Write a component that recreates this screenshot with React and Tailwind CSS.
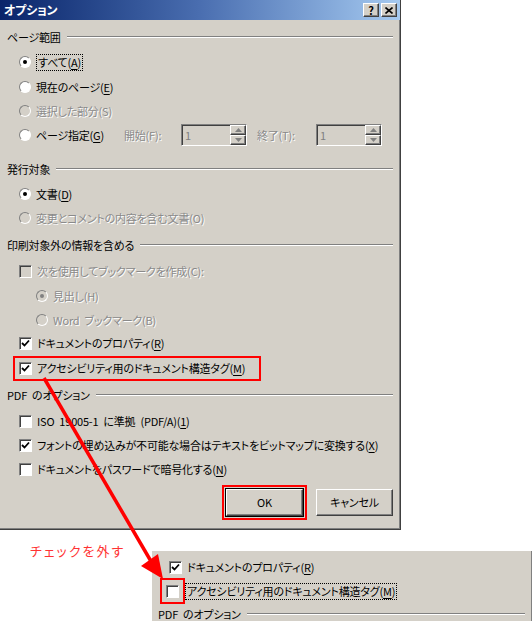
import React from 'react';

const font = "font-['Noto_Sans_CJK_JP','Noto_Sans',sans-serif] [font-feature-settings:'palt']";

const raised = 'border border-t-white border-l-white border-r-[#404040] border-b-[#404040] shadow-[inset_-1px_-1px_0_#808080] bg-[#d4d0c8]';
const sunken = 'border border-t-[#808080] border-l-[#808080] border-r-white border-b-white shadow-[inset_1px_1px_0_#404040]';
const disabledText = 'text-[#8a8a8a] [text-shadow:1px_1px_0_#fff]';

const Check = ({ checked, disabled }) => (
    <span className={`w-[13px] h-[13px] shrink-0 flex items-center justify-center ${sunken} ${disabled ? 'bg-[#d4d0c8]' : 'bg-white'}`}>
        {checked && (
            <svg width="9" height="9" viewBox="0 0 9 9">
                <path d="M1 4 L3.5 6.5 L8 1.5" fill="none" stroke="#000" strokeWidth="1.8" />
            </svg>
        )}
    </span>
);

const Radio = ({ checked, disabled }) => (
    <span className={`w-[12px] h-[12px] shrink-0 rounded-full flex items-center justify-center border border-t-[#808080] border-l-[#808080] border-r-white border-b-white ${disabled ? 'bg-[#d4d0c8]' : 'bg-white'}`}>
        {checked && <span className={`w-[4px] h-[4px] rounded-full ${disabled ? 'bg-[#808080]' : 'bg-black'}`} />}
    </span>
);

const Header = ({ children, className = '' }) => (
    <div className={`flex items-center h-5 pl-[7px] pr-[7px] ${className}`}>
        <span>{children}</span>
        <div className="flex-1 ml-[6px] h-[2px] border-t border-t-[#808080] border-b border-b-white" />
    </div>
);

const Row = ({ children, className = '' }) => (
    <div className={`flex items-center h-6 gap-[5px] ${className}`}>{children}</div>
);

const Spin = () => (
    <div className={`w-[66px] h-[22px] flex items-center bg-[#d4d0c8] ${sunken}`}>
        <span className="flex-1 pl-[3px] text-[#808080]">1</span>
        <div className="flex flex-col w-[16px] h-full">
            <div className={`flex-1 flex items-center justify-center ${raised}`}>
                <svg width="7" height="4" viewBox="0 0 7 4"><path d="M0 4 L3.5 0 L7 4Z" fill="#808080" /></svg>
            </div>
            <div className={`flex-1 flex items-center justify-center ${raised}`}>
                <svg width="7" height="4" viewBox="0 0 7 4"><path d="M0 0 L3.5 4 L7 0Z" fill="#808080" /></svg>
            </div>
        </div>
    </div>
);

const u = (c) => <u className="underline-offset-2">{c}</u>;
// 半角スペースを少し広げる
const sp = <span className="inline-block w-[5px]"> </span>;

export default function App() {
    return (
        <div className={`relative w-[532px] h-[621px] bg-white overflow-hidden text-[11px] tracking-[-0.2px] leading-none text-black whitespace-nowrap ${font}`}>
            {/* ダイアログ本体 */}
            <div className="w-[401px] bg-[#d4d0c8] border-r border-r-[#404040] border-b border-b-[#404040] shadow-[inset_-1px_-1px_0_#808080] pb-[9px]">
                <div className="h-[20px] flex items-center pl-[4px] pr-[3px] bg-gradient-to-r from-[#0a246a] via-[#4a6eb0] to-[#a6caf0]">
                    <span className="flex-1 text-white font-bold text-[12px]">オプション</span>
                    <div className="flex gap-[2px]">
                        <div className={`w-[16px] h-[14px] flex items-center justify-center font-bold text-[11px] ${raised}`}>?</div>
                        <div className={`w-[16px] h-[14px] flex items-center justify-center ${raised}`}>
                            <svg width="8" height="7" viewBox="0 0 8 7"><path d="M0.5 0.5 L7.5 6.5 M7.5 0.5 L0.5 6.5" stroke="#000" strokeWidth="1.6" /></svg>
                        </div>
                    </div>
                </div>

                <Header className="mt-[7px]">ページ範囲</Header>
                <div className="pl-[19px] pt-[3px]">
                    <Row>
                        <Radio checked />
                        <span className="px-[1px] py-[2px] border border-dotted border-black">すべて({u('A')})</span>
                    </Row>
                    <Row className="mt-px">
                        <Radio />
                        <span>現在のページ({u('E')})</span>
                    </Row>
                    <Row>
                        <Radio disabled />
                        <span className={disabledText}>選択した部分(S)</span>
                    </Row>
                    <Row>
                        <Radio />
                        <span className="w-[83px]">ページ指定({u('G')})</span>
                        <span className={`w-[52px] ${disabledText}`}>開始(F):</span>
                        <Spin />
                        <span className={`ml-[5px] w-[54px] ${disabledText}`}>終了(T):</span>
                        <Spin />
                    </Row>
                </div>

                <Header className="mt-[12px]">発行対象</Header>
                <div className="pl-[19px] pt-[3px]">
                    <Row>
                        <Radio checked />
                        <span>文書({u('D')})</span>
                    </Row>
                    <Row>
                        <Radio disabled />
                        <span className={disabledText}>変更とコメントの内容を含む文書(O)</span>
                    </Row>
                </div>

                <Header className="mt-[5px]">印刷対象外の情報を含める</Header>
                <div className="pl-[19px] pt-[4px]">
                    <Row>
                        <Check disabled />
                        <span className={disabledText}>次を使用してブックマークを作成(C):</span>
                    </Row>
                    <div className="pl-[17px]">
                        <Row className="mt-px">
                            <Radio checked disabled />
                            <span className={disabledText}>見出し(H)</span>
                        </Row>
                        <Row>
                            <Radio disabled />
                            <span className={disabledText}>Word{sp}ブックマーク(B)</span>
                        </Row>
                    </div>
                    <Row className="-mt-px">
                        <Check checked />
                        <span>ドキュメントのプロパティ({u('R')})</span>
                    </Row>
                </div>
                <div className="ml-[13px] mt-px w-[248px] h-[25px] border-2 border-[#ff0000] flex items-center gap-[5px] pl-[4px]">
                    <Check checked />
                    <span>アクセシビリティ用のドキュメント構造タグ({u('M')})</span>
                </div>

                <Header className="mt-[4px]">PDF{sp}のオプション</Header>
                <div className="pl-[19px] pt-[4px]">
                    <Row>
                        <Check />
                        <span>ISO{sp}19005-1{sp}に準拠{sp}(PDF/A)({u('1')})</span>
                    </Row>
                    <Row>
                        <Check checked />
                        <span>フォントの埋め込みが不可能な場合はテキストをビットマップに変換する({u('X')})</span>
                    </Row>
                    <Row>
                        <Check />
                        <span>ドキュメントをパスワードで暗号化する({u('N')})</span>
                    </Row>
                </div>

                <div className="flex justify-end items-center gap-[9px] pr-[7px] mt-[4px]">
                    <div className="border-2 border-[#ff0000] p-[2px]">
                        <div className={`w-[77px] h-[27px] flex items-center justify-center outline outline-1 outline-black ${raised}`}>OK</div>
                    </div>
                    <div className={`w-[77px] h-[27px] flex items-center justify-center ${raised}`}>キャンセル</div>
                </div>
            </div>

            {/* 注釈 */}
            <div className="flex items-start">
                <span className="ml-[30px] mt-[14px] text-[13px] tracking-[2px] text-[#ff3333]">チェックを外す</span>
                <div className="ml-auto mt-[21px] w-[380px] h-[72px] bg-[#d4d0c8] border-r border-r-[#808080] pt-[4px]">
                    <div className="flex items-center h-[24px] gap-[5px] pl-[17px]">
                        <Check checked />
                        <span>ドキュメントのプロパティ({u('R')})</span>
                    </div>
                    <div className="flex items-center h-[24px] pl-[8px]">
                        <div className="w-[25px] h-[26px] border-2 border-[#ff0000] flex items-center justify-center">
                            <Check />
                        </div>
                        <span className="px-[1px] py-[2px] border border-dotted border-black">アクセシビリティ用のドキュメント構造タグ({u('M')})</span>
                    </div>
                    <div className="flex items-center h-5 pl-[6px] pr-[6px] mt-[1px]">
                        <span>PDF{sp}のオプション</span>
                        <div className="flex-1 ml-[6px] h-[2px] border-t border-t-[#808080] border-b border-b-white" />
                    </div>
                </div>
            </div>

            {/* 矢印 */}
            <svg className="absolute left-0 top-0 pointer-events-none" width="532" height="621" viewBox="0 0 532 621">
                <line x1="44" y1="378" x2="152" y2="563" stroke="#ff0000" strokeWidth="3.5" />
                <path d="M163 579 L141 566 L158 554 Z" fill="#ff0000" />
            </svg>
        </div>
    );
}
